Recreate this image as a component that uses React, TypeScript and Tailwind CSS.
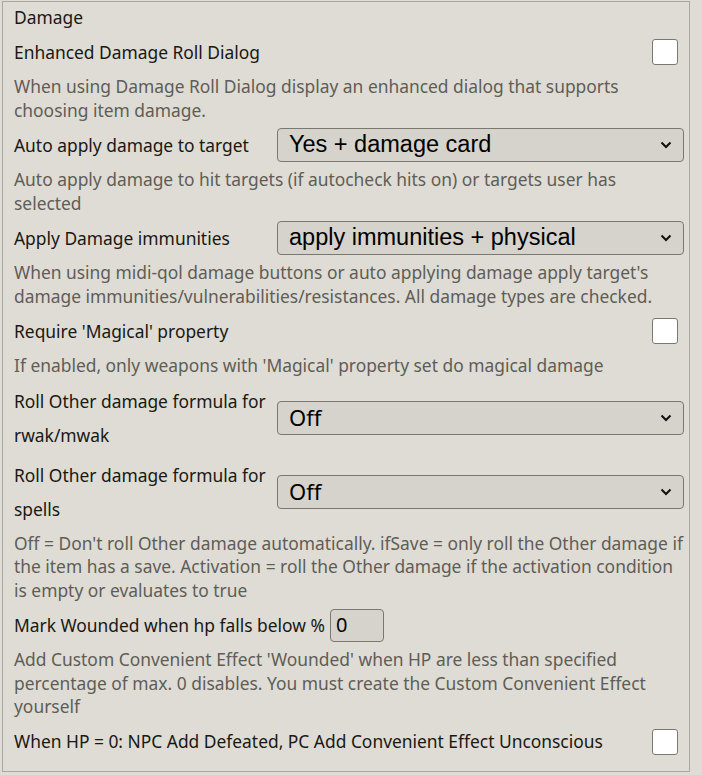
import React from 'react';

const Chevron = () => (
  <svg width="12" height="8" viewBox="0 0 12 8" className="shrink-0">
    <path d="M1.5 1.5 L6 6 L10.5 1.5" fill="none" stroke="#111" strokeWidth="2" />
  </svg>
);

const Checkbox = () => (
  <div className="w-[26px] h-[26px] shrink-0 rounded-[3px] border border-[#7a7971] bg-white" />
);

const Select = ({ value, arial }: { value: string; arial?: boolean }) => (
  <div className="flex-1 h-[34px] flex items-center justify-between pl-[11px] pr-[11px] rounded-[4px] border border-[#7a7971] bg-black/[0.04]">
    <span
      className={
        arial
          ? "font-['Liberation_Sans',Arial,sans-serif] text-[23.5px] text-black"
          : "font-['Noto_Sans',sans-serif] text-[22px] text-black"
      }
    >
      {value}
    </span>
    <Chevron />
  </div>
);

const Hint = ({ children }: { children: React.ReactNode }) => (
  <p className="text-[#5e5d57] leading-[23.5px]">{children}</p>
);

export default function App() {
  return (
    <div className="w-[702px] h-[775px] bg-[#dedcd4] overflow-hidden font-['Noto_Sans',sans-serif] text-[17.4px] text-[#191813]">
      <div className="ml-[2px] mt-[1px] w-[688px] h-[771px] border border-[#a9a7a0] pl-[11px] pr-[5px] pt-[3px] flex flex-col gap-[6px]">
        <div className="leading-[24px]">Damage</div>

        <div className="h-[34px] flex items-center justify-between pr-[6px]">
          <span>Enhanced Damage Roll Dialog</span>
          <Checkbox />
        </div>
        <Hint>When using Damage Roll Dialog display an enhanced dialog that supports choosing item damage.</Hint>

        <div className="h-[34px] flex items-center">
          <span className="w-[263px] shrink-0">Auto apply damage to target</span>
          <Select value="Yes + damage card" arial />
        </div>
        <Hint>Auto apply damage to hit targets (if autocheck hits on) or targets user has selected</Hint>

        <div className="h-[34px] flex items-center">
          <span className="w-[263px] shrink-0">Apply Damage immunities</span>
          <Select value="apply immunities + physical" arial />
        </div>
        <Hint>
          When using midi-qol damage buttons or auto applying damage apply target's damage immunities/vulnerabilities/resistances. All damage types are checked.
        </Hint>

        <div className="h-[34px] flex items-center justify-between pr-[6px]">
          <span>Require 'Magical' property</span>
          <Checkbox />
        </div>
        <Hint>If enabled, only weapons with 'Magical' property set do magical damage</Hint>

        <div className="flex items-center">
          <span className="w-[263px] shrink-0 leading-[34px]">Roll Other damage formula for rwak/mwak</span>
          <Select value="Off" />
        </div>

        <div className="flex items-center">
          <span className="w-[263px] shrink-0 leading-[34px]">Roll Other damage formula for spells</span>
          <Select value="Off" />
        </div>
        <Hint>
          Off = Don't roll Other damage automatically. ifSave = only roll the Other damage if the item has a save. Activation = roll the Other damage if the activation condition is empty or evaluates to true
        </Hint>

        <div className="h-[34px] flex items-center gap-[5px]">
          <span>Mark Wounded when hp falls below %</span>
          <div className="w-[54px] h-[33px] rounded-[4px] border border-[#7a7971] bg-black/[0.04] flex items-center pl-[5px] text-[20px] text-black">
            0
          </div>
        </div>
        <Hint>
          Add Custom Convenient Effect 'Wounded' when HP are less than specified percentage of max. 0 disables. You must create the Custom Convenient Effect yourself
        </Hint>

        <div className="h-[34px] flex items-center justify-between pr-[6px]">
          <span>When HP = 0: NPC Add Defeated, PC Add Convenient Effect Unconscious</span>
          <Checkbox />
        </div>
      </div>
    </div>
  );
}
